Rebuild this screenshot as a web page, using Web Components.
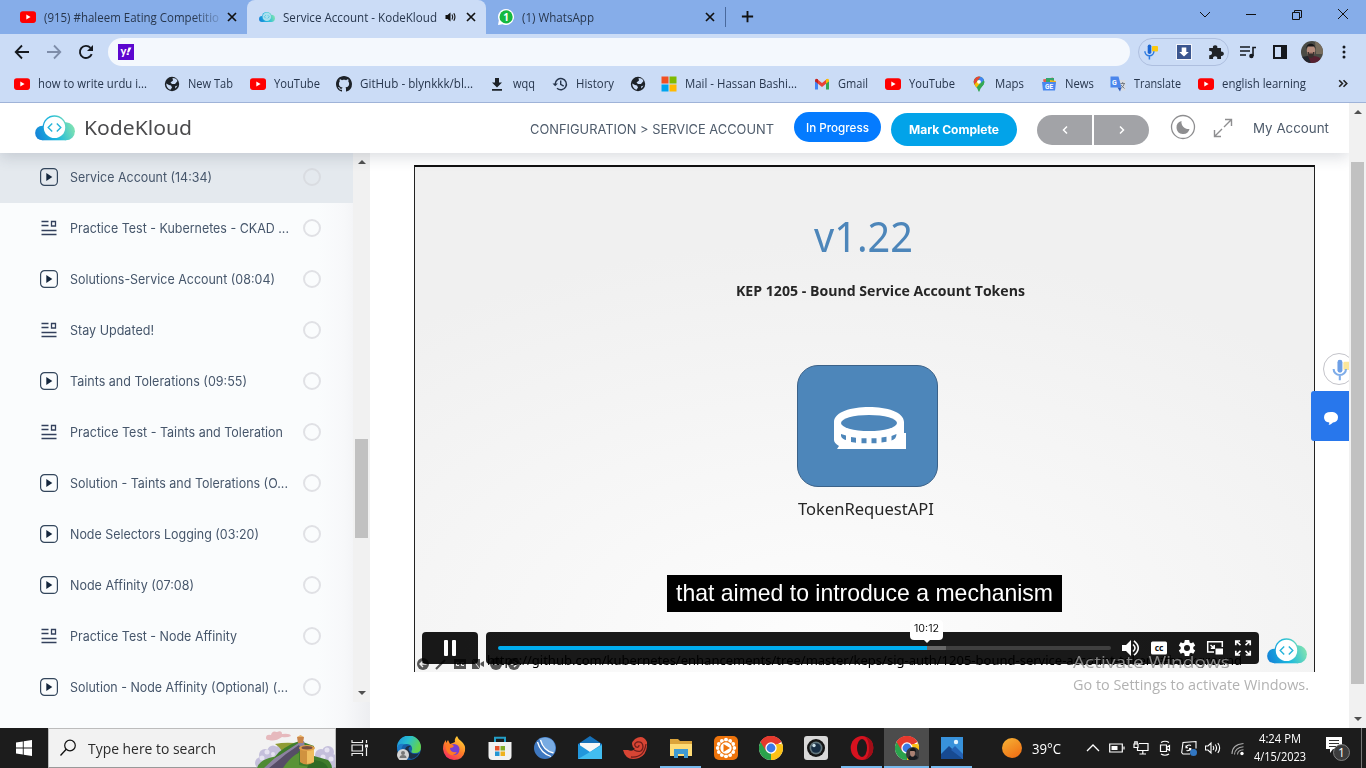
<!DOCTYPE html>
<html lang="en">
<head>
<meta charset="utf-8">
<title>Service Account - KodeKloud</title>
<style>
html,body{margin:0;width:1366px;height:768px;overflow:hidden;background:#fff}
</style>
</head>
<body>
<desktop-screen></desktop-screen>
<script>
const define = (name, css, html, after) => customElements.define(name, class extends HTMLElement {
  connectedCallback() {
    if (this.shadowRoot) return;
    const root = this.attachShadow({ mode: 'open' });
    root.innerHTML = `<style>*{box-sizing:border-box}${css}</style>` + (typeof html === 'function' ? html(this) : html);
    if (after) after(this, root);
  }
});

/* Text squeezed or stretched to the width given in "w". */
define('fit-text', `:host{display:block;flex:none;white-space:pre}span{display:inline-block;transform-origin:0 50%}`,
  '<span><slot></slot></span>',
  (el, root) => {
    const w = +el.getAttribute('w'), s = root.querySelector('span');
    el.style.width = 'max-content';
    const real = s.getBoundingClientRect().width;
    el.style.width = w + 'px';
    if (real) s.style.transform = `scaleX(${w / real})`;
  });

const cloud = `<svg viewBox="0 0 40 26"><defs><linearGradient id="c" gradientUnits="userSpaceOnUse" x1="2" y1="24" x2="37" y2="10"><stop offset="0" stop-color="#1583d8"/><stop offset=".5" stop-color="#1ab8dd"/><stop offset="1" stop-color="#7be0b4"/></linearGradient></defs><g fill="url(#c)"><circle cx="7.400" cy="18" r="7.300"/><circle cx="30.900" cy="16.300" r="9"/><circle cx="19.500" cy="12.100" r="11.800"/><path d="M7.400 14h23.500v11.300H7.400z"/></g><circle cx="19.500" cy="12.400" r="10.700" fill="#fff"/><path d="M17.200 8.400l-4 4 4 4M21.800 8.400l4 4-4 4" fill="none" stroke="#25b4da" stroke-width="1.400"/></svg>`;
const chromeArt = `<circle cx="12" cy="12" r="12" fill="#fff"/><path d="M12 12L1.600 6A12 12 0 0 1 22.400 6z" fill="#e5392d"/><path d="M12 12h10.400V6A12 12 0 0 1 12 24z" fill="#fbc116"/><path d="M12 12l0 12A12 12 0 0 1 1.600 6z" fill="#2ba24c"/><path d="M1.600 6L7 15 12 12V6h10.400A12 12 0 0 0 1.600 6" fill="#e5392d"/><path d="M12 24l5-9 0-7h5.400A12 12 0 0 1 12 24" fill="#fbc116"/><circle cx="12" cy="12" r="5.700" fill="#fff"/><circle cx="12" cy="12" r="4.400" fill="#3c79e6"/>`;
const ln = (d, w = 1.5, c = 'currentColor') => `<path d="${d}" fill="none" stroke="${c}" stroke-width="${w}"/>`;
const icons = {
  yt: `<svg viewBox="0 0 16 16"><rect y="2.300" width="16" height="11.600" rx="2.800" fill="#f00"/><path d="M6.300 5.600v5l4.300-2.500z" fill="#fff"/></svg>`,
  cloud,
  cloudtab: cloud.replace('fill="#fff"', 'fill="#a9e0ee"'),
  x: `<svg viewBox="0 0 16 16">${ln('M4 4l8 8M12 4l-8 8', 1.7)}</svg>`,
  sound: `<svg viewBox="0 0 16 16"><path d="M3.500 6h2L8.500 3.500v9L5.500 10h-2z" fill="currentColor"/>${ln('M10 5.500q1.500 2.500 0 5M11.800 4.300q2.300 3.700 0 7.400', 1.1)}</svg>`,
  wa: `<svg viewBox="0 0 16 16"><path d="M8 0a8 8 0 1 1-3.500 15.200L0 16l.8-4.500A8 8 0 0 1 8 0z" fill="#fff"/><circle cx="8.100" cy="7.900" r="6.600" fill="#15b93f"/><text x="8" y="11.500" text-anchor="middle" font-family="Open Sans,sans-serif" font-weight="700" font-size="10" fill="#fff">1</text></svg>`,
  plus: `<svg viewBox="0 0 16 16">${ln('M8 2v12M2 8h12', 2)}</svg>`,
  back: `<svg viewBox="0 0 16 16">${ln('M15 8H2M8 1.500L1.700 8 8 14.500', 1.800)}</svg>`,
  fwd: `<svg viewBox="0 0 16 16">${ln('M1 8h13M8 1.500L14.300 8 8 14.500', 1.800)}</svg>`,
  reload: `<svg viewBox="0 0 16 16">${ln('M13.700 10.200A6.100 6.100 0 1 1 12.500 3.800', 1.900)}<path d="M15 1v6H9z" fill="currentColor"/></svg>`,
  yahoo: `<svg viewBox="0 0 16 16"><path d="M0 0h16v16H0z" fill="#5c07cf"/><text x="2.500" y="11" font-family="Lato,sans-serif" font-weight="900" font-size="11" fill="#fff">y</text><path d="M10.500 3.500h3L11 8.500H9zM8.600 9.200h2.200v1.800H8.600z" fill="#fff"/></svg>`,
  mic: `<svg viewBox="0 0 16 16"><rect x="9" y="2" width="6" height="5.500" rx="1" fill="#fbc910"/><rect x="4.700" y=".5" width="3.600" height="9.500" rx="1.800" fill="#1b66d2"/>${ln('M1.900 7.200a4.500 4.500 0 0 0 9 0M6.400 12v3.500', 1.500, '#2d7be0')}</svg>`,
  micl: `<svg viewBox="0 0 16 16"><rect x="9" y="2" width="6" height="6" rx="1" fill="#fbe69a"/><rect x="4.700" y=".5" width="3.600" height="9.500" rx="1.800" fill="#6d9fe6"/>${ln('M1.900 7.200a4.500 4.500 0 0 0 9 0M6.400 12v3.500', 1.500, '#7fade9')}</svg>`,
  save: `<svg viewBox="0 0 16 16"><path d="M0 0h16v16H0z" fill="#f3f5fa"/><path d="M1 1h14v14H1z" fill="#3b568f"/><path d="M5.700 3.500h4.600V8h2.500L8 12.500 3.200 8h2.500z" fill="#fff"/></svg>`,
  puzzle: `<svg viewBox="0 0 16 16"><path d="M1.200 4H5a2.200 2.200 0 1 1 4.300 0h3.700v3.700a2.200 2.200 0 1 1 0 4.200v3H9.200a2.100 2.100 0 1 0-4.100 0h-3.900v-3.700a2.200 2.200 0 1 0 0-4.200z" fill="#202327"/></svg>`,
  music: `<svg viewBox="0 0 16 16">${ln('M0 3h10M0 7h10M0 11h6M13 12V3.500h3', 1.600)}<circle cx="11.400" cy="12" r="2.200" fill="currentColor"/></svg>`,
  panel: `<svg viewBox="0 0 16 16"><path d="M1 1h14v14H1zM3 3v10h6V3z" fill="#15181d" fill-rule="evenodd"/></svg>`,
  face: `<svg viewBox="0 0 22 22"><defs><clipPath id="f"><circle cx="11" cy="11" r="11"/></clipPath></defs><g clip-path="url(#f)"><path d="M0 0h22v22H0z" fill="#4a4b45"/><path d="M14 0h8v13h-7z" fill="#786d5d"/><path d="M2 22c0-7 4-7 9-7s10 1 10 7z" fill="#572131"/><path d="M0 22v-6l7-1 3 7z" fill="#22272e"/><ellipse cx="10" cy="9.500" rx="4.200" ry="6" fill="#b58c7c"/><path d="M5.500 8c-1-7 9-7 9 0l-1-2.500H6.500z" fill="#171719"/><path d="M6.500 11h7l-1 5q-2.500 2-5 0z" fill="#39302e"/><path d="M8 11h4v1.500H8z" fill="#a5796b"/></g></svg>`,
  dots: `<svg viewBox="0 0 16 16"><g fill="currentColor"><circle cx="8" cy="3" r="1.500"/><circle cx="8" cy="8" r="1.500"/><circle cx="8" cy="13" r="1.500"/></g></svg>`,
  globe: `<svg viewBox="0 0 16 16"><circle cx="8" cy="8" r="7.200" fill="#1d2228"/><path d="M8.500 2q4 0 5 3L11 8H8L6.500 6.500 9 4.500zM2.200 7.500L5 9l2 .5 1 2-1.500 2.300Q2.500 12.500 2.200 7.500zM11 10.500l2.500-1-2 3z" fill="#cbdcf6"/></svg>`,
  gh: `<svg viewBox="0 0 16 16"><path fill="#1d2228" d="M8 0C3.580 0 0 3.580 0 8c0 3.540 2.290 6.530 5.470 7.590.4.070.55-.17.55-.38 0-.19-.01-.82-.01-1.490-2.010.37-2.530-.49-2.690-.94-.09-.23-.48-.94-.82-1.130-.28-.15-.68-.52-.01-.53.63-.01 1.080.58 1.230.82.72 1.210 1.870.87 2.330.66.07-.52.28-.87.51-1.070-1.780-.2-3.640-.89-3.640-3.950 0-.87.31-1.590.82-2.150-.08-.2-.36-1.020.08-2.120 0 0 .67-.21 2.200.82.64-.18 1.320-.27 2-.27s1.360.09 2 .27c1.530-1.040 2.200-.82 2.200-.82.44 1.100.16 1.920.08 2.120.51.56.82 1.270.82 2.150 0 3.070-1.870 3.750-3.650 3.950.29.25.54.73.54 1.480 0 1.070-.01 1.930-.01 2.200 0 .21.15.46.55.38A8 8 0 0 0 16 8c0-4.420-3.580-8-8-8z"/></svg>`,
  dl: `<svg viewBox="0 0 16 16"><path d="M6 2h4v4.500h3L8 11.500 3 6.500h3zM3 13h10v1.700H3z" fill="#1d2228"/></svg>`,
  hist: `<svg viewBox="0 0 16 16">${ln('M3.200 8A5.600 5.600 0 1 1 5 12.300M8.700 4.500V8.300l3 1.800', 1.400)}<path d="M.5 7.500h5.400L3.200 10.300z" fill="currentColor"/></svg>`,
  ms: `<svg viewBox="0 0 16 16"><path d="M.5.500h7v7h-7z" fill="#f25022"/><path d="M8.500.500h7v7h-7z" fill="#7fba00"/><path d="M.5 8.500h7v7h-7z" fill="#00a4ef"/><path d="M8.500 8.500h7v7h-7z" fill="#ffb900"/></svg>`,
  gmail: `<svg viewBox="0 0 16 16"><path d="M1 4l3 2v7.500H1z" fill="#4285f4"/><path d="M12 6l3-2v9.500h-3z" fill="#34a853"/><path d="M3 3l5 4 5-4v4l-5 4-5-4z" fill="#ea4335"/><path d="M1 4.500Q1 1.500 4 3.300V7.500L1 5.500z" fill="#c5221f"/><path d="M15 4.500Q15 1.500 12 3.300V7.500l3-2z" fill="#fbbc04"/></svg>`,
  maps: `<svg viewBox="0 0 16 16"><path d="M8 .5a5.300 5.300 0 0 1 5.300 5.300C13.300 9.500 9.500 11 8.500 15.500h-1C6.500 11 2.700 9.500 2.700 5.800A5.300 5.300 0 0 1 8 .5z" fill="#34a853"/><path d="M4 2.500A5.300 5.300 0 0 1 9.700.8L6.300 4.700z" fill="#ea4335"/><path d="M13.200 5q.6 3.500-3 6L8 12.500 4.500 10z" fill="#34a853"/><path d="M3.300 8.500L6.500 4.700 8.500 8 5.500 11.500z" fill="#fbbc04"/><path d="M9.700.8A5.300 5.300 0 0 1 13 4L9.700 7.300 7.500 3.500z" fill="#4285f4"/><path d="M2.700 5.800q0-2 1.300-3.300l2.500 2L3.300 8.500z" fill="#ea4335"/><circle cx="8" cy="5.800" r="1.900" fill="#fff"/></svg>`,
  news: `<svg viewBox="0 0 16 16"><path d="M2 3.500l10-2 .8 6H3z" fill="#e35b4d"/><path d="M5 2h8v7H5z" fill="#35a56a"/><path d="M9 4l6 1-1 4H9z" fill="#f4b51c"/><path d="M1 6h14l-1 8.500H2z" fill="#4a87ee"/><text x="8" y="12.500" text-anchor="middle" font-size="6.500" font-weight="700" font-family="Roboto,sans-serif" fill="#fff">GE</text></svg>`,
  trans: `<svg viewBox="0 0 16 16"><path d="M7 4h8.500v10.500H10z" fill="#d8dce3"/><path d="M.5.500h8l3 11H.5z" fill="#4b86ec"/><path d="M7.500 11.500h4L10 15.500z" fill="#2c5cc0"/>${ln('M10.500 7.500h4.500M12.700 6v1.500M14.300 7.500q-.7 3-3 4.500M11 9l3.500 3.500', .9, '#70777f')}<text x="2" y="8.500" font-size="7" font-weight="700" font-family="Roboto,sans-serif" fill="#fff">G</text></svg>`,
  play: `<svg viewBox="0 0 18 18"><rect x=".6" y=".6" width="16.800" height="16.800" rx="4" fill="none" stroke="#33465c" stroke-width="1.200"/><path d="M6.300 5v8l6-4z" fill="#14263c"/></svg>`,
  list: `<svg viewBox="0 0 18 18">${ln('M1.500 2.500h7M1.500 6.500h7M1.500 11.500h15M1.500 15.500h15M11.500 2.500h4v4.500h-4z', 1.300, '#33405c')}</svg>`,
  moon: `<svg viewBox="0 0 26 26"><circle cx="13" cy="13" r="11.500" fill="none" stroke="#8e8e90" stroke-width="1.300"/><path d="M11.500 7a7 7 0 0 0 8 8 6.600 6.600 0 1 1-8-8z" fill="#8e8e90"/></svg>`,
  expand: `<svg viewBox="0 0 20 20">${ln('M12 1.500h6.500V8M18 2l-7 7M1.500 12v6.500H8M2 18l7-7', 1.400, '#8e8e90')}</svg>`,
  tape: `<svg viewBox="0 0 74 44"><path d="M1 16C1-4 71-4 71 16V27h2V43H4l2-3q-5-3-5-6z" fill="#fff"/><ellipse cx="36" cy="17" rx="28" ry="8" fill="#4d86ba"/><g fill="#4d86ba"><path d="M8 28l5 1.500v4.500q-4-1-5-4zM18 31l5 .7v5l-5-.7zM28.500 32.200h5v5h-5zM38.500 32.200h5v5h-5zM48.500 31.500l5-.8v5l-5 .8zM58.500 30l5-2q0 5-5 6.500z"/></g></svg>`,
  vol: `<svg viewBox="0 0 18 18"><path d="M0 6h4l5-5v16l-5-5H0z" fill="#fff"/>${ln('M11 5.500q4 3.500 0 7M12 1.800q8.500 7.200 0 14.400', 1.600, '#fff')}</svg>`,
  cc: `<svg viewBox="0 0 18 18"><rect x="1" y="2.500" width="16" height="13" rx="1.500" fill="#fff"/><text x="9" y="12.300" text-anchor="middle" font-size="8.500" font-weight="700" font-family="Open Sans,sans-serif" fill="#111">cc</text></svg>`,
  gear: `<svg viewBox="0 0 18 18"><path fill="#fff" fill-rule="evenodd" d="M6.800 1h4.400l.5 2.500 1.300.7 2.300-1 1.900 3.200L15.300 8v2l1.900 1.600-1.900 3.200-2.300-1-1.300.7-.5 2.500H6.800l-.5-2.500-1.300-.7-2.300 1-1.900-3.200L2.700 10V8L.8 6.400l1.900-3.200 2.300 1 1.300-.7zM9 6a3 3 0 1 0 0 6 3 3 0 0 0 0-6z"/></svg>`,
  pip: `<svg viewBox="0 0 18 18">${ln('M8 13H1.700V2.700h14.600V8M4.500 6l3.500 3M8.200 6v3.300H4.800', 1.500, '#fff')}<path d="M9.500 9.500H17V15.500H9.500z" fill="#fff"/></svg>`,
  full: `<svg viewBox="0 0 18 18">${ln('M1.800 6.200V2h4.300M2 2l4.500 4.200M11.800 2h4.400v4.200M16 2l-4.500 4.200M1.800 11.800V16h4.300M2 16l4.500-4.200M11.800 16h4.400v-4.200M16 16l-4.500-4.200', 1.700, '#fff')}</svg>`,
  win: `<svg viewBox="0 0 16 16"><path d="M0 2.500l6.800-1V7.600H0zM7.700 1.300L16 0v7.600H7.700zM0 8.400h6.800v6.100l-6.800-1zM7.700 8.400H16V16l-8.300-1.300z" fill="#fff"/></svg>`,
  search: `<svg viewBox="0 0 18 18"><circle cx="11" cy="6.500" r="5.300" fill="none" stroke="#111" stroke-width="1.200"/>${ln('M7.200 10.300L1.500 16.500', 1.300, '#111')}</svg>`,
  wall: `<svg viewBox="0 0 80 40"><g fill="#c4bfdb"><circle cx="10" cy="27" r="6"/><circle cx="18" cy="23" r="5.500"/><circle cx="24" cy="23" r="5"/><circle cx="6" cy="35" r="6"/><circle cx="14" cy="34" r="6"/><circle cx="73" cy="24" r="6"/><circle cx="66" cy="27" r="6"/><circle cx="77" cy="33" r="7"/><circle cx="69" cy="34" r="6"/></g><g fill="#e6e3f1"><circle cx="12" cy="24" r="2.500"/><circle cx="7" cy="30" r="2.500"/><circle cx="18" cy="26" r="2"/><circle cx="72" cy="22" r="2.500"/><circle cx="68" cy="29" r="2.500"/><circle cx="76" cy="31" r="2.500"/></g><path d="M11 10q0-4 5-3 1-5 6-3 5-2 5 2 8-1 9 2-4 2-9 1-7 5-13 3-3 0-3-2z" fill="#e6b9bd"/><path d="M20 16q9-2 20-1l-13 8q-2-4-7-7z" fill="#8f9b35"/><path d="M24 24q10-8 21-11l14 5v10l14 4q4 4 4 8H10z" fill="#3f7d2c"/><path d="M8 40q8-9 17-13l20-13 4-1 1 7-9 4-19 16z" fill="#8c82a0"/><path d="M14 40q10-8 17-14l13-9 2 4-16 19z" fill="#564d66"/><path d="M2 40q2-7 12-10l8-2-13 12z" fill="#4e8a33"/><path d="M28 40q8-12 16-15v12l16 3z" fill="#5a9336"/><path d="M56 32q14 0 17 8H52z" fill="#2f6b25"/><path d="M45 20h14v14q-7 5-14 0z" fill="#d0923f"/><path d="M52 20h7v14l-7 2z" fill="#efbd5f"/><ellipse cx="52" cy="20" rx="8" ry="3" fill="#e0a04b"/><ellipse cx="52" cy="19.800" rx="5.500" ry="1.700" fill="#785044"/><path d="M42 9h7l-1 6h-5z" fill="#c98448"/><path d="M42 9l3.500-2L49 9z" fill="#e8b268"/></svg>`,
  task: `<svg viewBox="0 0 18 18">${ln('M1 1v2.500h10.500V1M1 17v-2.500h10.500V17M1 6h10.500v6H1zM15.500 1v3M15.500 9v8', 1.200, '#eee')}<path d="M14 5.500h3v3h-3z" fill="#eee"/></svg>`,
  edge: `<svg viewBox="0 0 24 24"><defs><linearGradient id="e" x2="1" y2=".4"><stop stop-color="#1c8fe0"/><stop offset=".5" stop-color="#28bfcf"/><stop offset="1" stop-color="#62d34e"/></linearGradient></defs><circle cx="12" cy="12" r="12" fill="#155fa8"/><path d="M0 12a12 12 0 0 1 24-1q0 6-6 6-5 0-3-3 1-5-5-6Q3 8 0 12z" fill="url(#e)"/><path d="M14 10q-5 2 0 7 4 2 8 0-2 5-8 6Q7 20 8 13q2-4 6-3z" fill="#1c2f46"/><path d="M0 12q1-5 7-4-4 4-2 10 2 5 7 6Q1 23 0 12z" fill="#1b7cc9"/><circle cx="6" cy="19" r="6" fill="#d4d4d4"/><circle cx="6" cy="17" r="2" fill="#777"/><path d="M2.500 22q0-3 3.500-3t3.500 3z" fill="#777"/></svg>`,
  fox: `<svg viewBox="0 0 24 24"><defs><linearGradient id="x" x1=".8" x2=".2" y2="1"><stop stop-color="#ffdb38"/><stop offset=".5" stop-color="#ff7f27"/><stop offset="1" stop-color="#f32464"/></linearGradient></defs><path d="M15 0q1 3 4 5 5 4 4 10-2 9-11 9Q2 23 1 13q0-6 3-9v3l2-3 2 4q3-1 5-2-1-3 2-6z" fill="url(#x)"/><circle cx="12" cy="13.500" r="5.500" fill="#7540d3"/><path d="M4 9q6-2 8 1-1 2-4 2 0 5 7 4-4 6-9 1-3-4-2-8z" fill="#ff7a24"/></svg>`,
  store: `<svg viewBox="0 0 24 24"><path d="M7 7V1.800h10V7" fill="none" stroke="#239fc8" stroke-width="2"/><path d="M.5 6h23v14q0 4-4 4h-15q-4 0-4-4z" fill="#f1f1f1"/><path d="M7 10h4.500v4.500H7z" fill="#e5532d"/><path d="M12.500 10H17v4.500h-4.500z" fill="#83ab27"/><path d="M7 15.500h4.500V20H7z" fill="#2496d4"/><path d="M12.500 15.500H17V20h-4.500z" fill="#efb21e"/></svg>`,
  blue: `<svg viewBox="0 0 24 24"><circle cx="12" cy="12" r="11" fill="#3f78c0"/><path d="M6 3Q14-1 20 5q4 6 1 12-9 0-15-14z" fill="#78abe2"/>${ln('M4.500 6q3 11 13.500 14.500M7.500 4q3 11 13 13', 1.300, '#fff')}</svg>`,
  mail: `<svg viewBox="0 0 24 24"><path d="M0 8l12-8 12 8v15H0z" fill="#1670b8"/><path d="M2 7h20v9H2z" fill="#f7f7f7"/><path d="M0 8l12 8L24 8v15H0z" fill="#2196dc"/><path d="M0 23L24 9v14z" fill="#42bdf0"/></svg>`,
  shell: `<svg viewBox="0 0 24 24"><path d="M0 14h5q4 2 7-1-6-5 0-10 8-5 12 3 1 12-8 16Q3 26 0 14z" fill="#d84534"/>${ln('M11 14q8 4 9-3 0-6-6-5-4 2-1 5 3 1 3-2M23 8q-2 14-15 13', 1.300, '#701e1b')}</svg>`,
  folder: `<svg viewBox="0 0 24 24"><path d="M1 3h8l2 2h12v15H1z" fill="#dca43b"/><path d="M1 8h22v12H1z" fill="#ffdc76"/><path d="M5 13h14v9h-4v-4H9v4H5z" fill="#409bd2"/></svg>`,
  flower: `<svg viewBox="0 0 24 24"><rect width="24" height="24" rx="5" fill="#ee740c"/><g fill="#fff"><circle cx="12" cy="3.800" r="2"/><circle cx="16.100" cy="4.900" r="2"/><circle cx="19.100" cy="7.900" r="2"/><circle cx="20.200" cy="12" r="2"/><circle cx="19.100" cy="16.100" r="2"/><circle cx="16.100" cy="19.100" r="2"/><circle cx="12" cy="20.200" r="2"/><circle cx="7.900" cy="19.100" r="2"/><circle cx="4.900" cy="16.100" r="2"/><circle cx="3.800" cy="12" r="2"/><circle cx="4.900" cy="7.900" r="2"/><circle cx="7.900" cy="4.900" r="2"/></g><circle cx="12" cy="12" r="6.700" fill="#ee740c"/><circle cx="12" cy="12" r="5.700" fill="#fff"/><path d="M9.500 8v8l6.500-4z" fill="#ee740c"/></svg>`,
  chrome: `<svg viewBox="0 0 24 24">${chromeArt}</svg>`,
  camera: `<svg viewBox="0 0 24 24"><rect width="24" height="24" rx="3" fill="#d9d9d9"/><circle cx="12" cy="12" r="9" fill="#151515"/><circle cx="12" cy="12" r="6.500" fill="#61747b"/><circle cx="12" cy="12" r="4.800" fill="#172d43"/><circle cx="10" cy="9.500" r="1.700" fill="#cae0e9"/></svg>`,
  opera: `<svg viewBox="0 0 24 24"><ellipse cx="12" cy="12" rx="11.300" ry="12" fill="#d6121f"/><path d="M15 .8q8.300 2 8.300 11.200T15 23.200q4-3 4-11.200T15 .8z" fill="#a20d17"/><ellipse cx="12" cy="12" rx="5" ry="9" fill="#1c1c1c"/></svg>`,
  chrome2: `<svg viewBox="0 0 24 24">${chromeArt}<circle cx="18" cy="18" r="7" fill="#39393b"/><path d="M13 23q1-4 5-4t5 3q-5 4-10 1z" fill="#171b20"/><ellipse cx="17.500" cy="17" rx="2.500" ry="3.700" fill="#aa8173"/><path d="M15 15q0-3 3-3t3 4l-2-1z" fill="#151515"/></svg>`,
  photo: `<svg viewBox="0 0 24 24"><path d="M1 1h22v22H1z" fill="#3892db"/><path d="M1 18l8-8 14 13H1z" fill="#174a91"/><path d="M11 14l4-4 8 8v5z" fill="#2462b4"/><circle cx="16" cy="6" r="2.200" fill="#e4f5ff"/></svg>`,
  sun: `<svg viewBox="0 0 20 20"><defs><linearGradient id="s" x2=".6" y2="1"><stop stop-color="#f6b436"/><stop offset="1" stop-color="#f07316"/></linearGradient></defs><circle cx="10" cy="10" r="10" fill="url(#s)"/></svg>`,
  up: `<svg viewBox="0 0 16 16">${ln('M2 11l6-6 6 6', 1.3)}</svg>`,
  batt: `<svg viewBox="0 0 16 16">${ln('M.7 4h12.600v8H.7zM15 6.500v3', 1.2)}<path d="M2.500 6h6v4h-6z" fill="currentColor"/></svg>`,
  net: `<svg viewBox="0 0 16 16">${ln('M6 3.500h9v7H4.500V8M9.800 10.500V14M6.500 14h6.500M1 4h4v3.500H1zM1.800 4V1.800h2.400V4', 1.2)}</svg>`,
  meet: `<svg viewBox="0 0 16 16">${ln('M3.500 5h6v6.500h-6zM9.500 7.500l3-2v5l-3-2M4 2.500q4-2.500 8 0M4 14q4 2.500 8 0', 1.2)}</svg>`,
  sync: `<svg viewBox="0 0 16 16">${ln('M9 14H2L.7 12.500 2 2.500l13-1v7M10 5.500a3.300 3.300 0 0 0-5 2M5 5.500v2.200h2M5.500 10.500a3.300 3.300 0 0 0 4-2M9.800 10.700V8.500H8', 1.100)}<circle cx="12.500" cy="12.500" r="3.500" fill="#3277c3"/></svg>`,
  spk: `<svg viewBox="0 0 16 16">${ln('M.5 6H3l3-3v10l-3-3H.5zM8 6q1.500 2 0 4M10.300 4.500q2.500 3.500 0 7M12.800 3q3.700 5 0 10', 1.1)}</svg>`,
  wifi: `<svg viewBox="0 0 16 16">${ln('M3 14Q3 4.500 14.500 3.500M5.500 14.500Q6 7.500 14.500 6.800M8.500 14.500q0-4.500 6-4.800', 1.1, '#aaa')}<circle cx="13" cy="13.500" r="1.700" fill="#fff"/></svg>`,
  note: `<svg viewBox="0 0 26 26"><path d="M1 1h16v12H8l-3 4v-4H1z" fill="#fff"/>${ln('M4 4.500h10M4 7.500h10M4 10.500h7', 1, '#333')}<circle cx="16.500" cy="16.500" r="8" fill="#3c3c3c" stroke="#969696" stroke-width=".8"/><text x="16.500" y="21" text-anchor="middle" font-size="12" font-family="Open Sans,sans-serif" fill="#fff">1</text></svg>`,
  vdown: `<svg viewBox="0 0 12 12">${ln('M1 4l5 5 5-5', 1)}</svg>`,
  min: `<svg viewBox="0 0 12 12">${ln('M1 6.500h10', 1)}</svg>`,
  max: `<svg viewBox="0 0 12 12">${ln('M1.500 4.500h7v7h-7zM3.500 4.500v-2h7v7h-2', 1)}</svg>`,
  close: `<svg viewBox="0 0 12 12">${ln('M1 1l10 10M11 1L1 11', 1)}</svg>`,
  more2: `<svg viewBox="0 0 12 12">${ln('M2 3l3 3-3 3M6 3l3 3-3 3', 1.500, '#222')}</svg>`,
  slideL: `<svg viewBox="0 0 12 12"><circle cx="6" cy="6" r="6" fill="#555"/>${ln('M9.500 6H3M6 3L3 6l3 3', 1.400, '#eee')}</svg>`,
  slideR: `<svg viewBox="0 0 12 12"><circle cx="6" cy="6" r="6" fill="#555"/>${ln('M2.500 6H9M6 3l3 3-3 3', 1.400, '#eee')}</svg>`,
  pen: `<svg viewBox="0 0 12 12">${ln('M1 11L10 2', 2.200, '#555')}</svg>`,
  cc2: `<svg viewBox="0 0 12 12"><path d="M0 1h12v10H0z" fill="#555"/>${ln('M5 4.500H2.500v3H5M10 4.500H7.500v3H10', 1, '#eee')}</svg>`,
  nocam: `<svg viewBox="0 0 12 12"><path d="M0 1h8v10H0zM8.500 5L12 3v6L8.500 7z" fill="#555"/>${ln('M0 1l8 10', 1, '#eee')}</svg>`,
  more: `<svg viewBox="0 0 12 12"><circle cx="6" cy="6" r="6" fill="#555"/><path d="M2.500 5.200h1.600v1.600H2.500zM5.200 5.200h1.600v1.600H5.200zM7.900 5.200h1.600v1.600H7.900z" fill="#eee"/></svg>`,
  chat: `<svg viewBox="0 0 16 16"><path d="M8 2c4.500 0 7 2 7 5.300S13 12 10 12.500Q8 14.800 5.500 15q1-1.300.8-2.600Q1 12 1 7.300 1 2 8 2z" fill="#fff"/></svg>`
};
define('ui-icon', `:host{display:block;flex:none;width:var(--s,16px);height:var(--h,var(--s,16px))}svg{display:block;width:100%;height:100%}`,
  el => icons[el.getAttribute('name')] || '');

define('browser-tab', `:host{display:flex;align-items:center;height:34px;color:#27364d;font:12px "Open Sans",sans-serif;--s:16px;flex:none}
:host([active]){background:#cbdcf6;border-radius:8px 8px 0 0}.sp{flex:1}ui-icon:last-child{color:#111}.snd{color:#111;margin-right:5px}
fit-text{margin-left:8px}:host([fade]) fit-text{-webkit-mask:linear-gradient(90deg,#000 85%,rgba(0,0,0,.2))}`,
  el => `<ui-icon name="${el.getAttribute('icon')}"></ui-icon><fit-text w="${el.getAttribute('w')}">${el.getAttribute('label')}</fit-text><div class="sp"></div>${el.hasAttribute('active') ? '<ui-icon class="snd" name="sound"></ui-icon>' : ''}<ui-icon name="x"></ui-icon>`);

define('tab-strip', `:host{display:flex;height:34px;background:#86ade9}
browser-tab:nth-of-type(1){width:247px;padding:0 7px 0 20px}browser-tab:nth-of-type(2){width:239px;padding:0 7px 0 12px}browser-tab:nth-of-type(3){width:239px;padding:0 7px 0 12px}
i{width:1px;height:20px;margin-top:7px;background:#49699d}.p{margin:9px 0 0 14px;color:#111}.g{flex:1}.c{display:flex;gap:34px;padding:8px 17px 0 0;--s:12px;color:#111}`,
  `<browser-tab icon="yt" w="175" fade label="(915) #haleem Eating Competitio"></browser-tab><browser-tab active icon="cloudtab" w="154" label="Service Account - KodeKloud"></browser-tab><browser-tab icon="wa" w="72" label="(1) WhatsApp"></browser-tab><i></i><ui-icon class="p" name="plus" style="--s:15px"></ui-icon><div class="g"></div><div class="c"><ui-icon name="vdown"></ui-icon><ui-icon name="min"></ui-icon><ui-icon name="max"></ui-icon><ui-icon name="close"></ui-icon></div>`);

define('tool-bar', `:host{display:flex;align-items:center;height:36px;background:#cbdcf6;padding-left:14px;color:#15191f}
.n{margin-right:16px}.o{width:1022px;height:28px;border-radius:14px;background:#f4f8fd;margin-left:-2px;padding:6px 10px}
.e{width:91px;height:28px;border:1px solid #aebfdf;border-radius:14px;margin-left:8px;display:flex;align-items:center;padding-left:4px;gap:17px;--s:16px}.m{margin-left:11px}.k{margin-left:16px}.f{margin-left:13px}.d{margin-left:13px}`,
  `<ui-icon class="n" name="back"></ui-icon><ui-icon class="n" name="fwd" style="color:#7e8da9"></ui-icon><ui-icon class="n" name="reload"></ui-icon><div class="o"><ui-icon name="yahoo"></ui-icon></div><div class="e"><ui-icon name="mic"></ui-icon><ui-icon name="save"></ui-icon><ui-icon name="puzzle" style="margin-left:-1px"></ui-icon></div><ui-icon class="m" name="music"></ui-icon><ui-icon class="k" name="panel"></ui-icon><ui-icon class="f" name="face" style="--s:22px"></ui-icon><ui-icon class="d" name="dots"></ui-icon>`);

define('book-mark', `:host{display:flex;align-items:center;gap:8px;flex:none}`,
  el => `<ui-icon name="${el.getAttribute('icon')}"></ui-icon>${el.getAttribute('label') ? `<fit-text w="${el.getAttribute('w')}">${el.getAttribute('label')}</fit-text>` : ''}`);
const marks = [['yt', 'how to write urdu i...', 109, 150], ['globe', 'New Tab', 45, 86], ['yt', 'YouTube', 46, 86], ['gh', 'GitHub - blynkkk/bl...', 113, 153], ['dl', 'wqq', 22, 63], ['hist', 'History', 38, 78], ['globe', '', 0, 31], ['ms', 'Mail - Hassan Bashi...', 112, 153], ['gmail', 'Gmail', 30, 71], ['yt', 'YouTube', 46, 86], ['maps', 'Maps', 29, 70], ['news', 'News', 29, 69], ['trans', 'Translate', 47, 88], ['yt', 'english learning', 84, 139]];
define('bookmark-bar', `:host{display:flex;align-items:center;height:33px;padding:0 0 5px 14px;background:#cbdcf6;border-bottom:1px solid #9fb3d8;font:12px "Open Sans",sans-serif;color:#27364d}`,
  () => marks.map(m => `<book-mark icon="${m[0]}" label="${m[1]}" w="${m[2]}" style="width:${m[3]}px"></book-mark>`).join('') + '<ui-icon name="more2" style="--s:13px"></ui-icon>');

define('site-header', `:host{display:flex;align-items:center;height:50px;width:1349px;background:#fff;box-shadow:0 4px 14px rgba(50,60,85,.18);position:relative;z-index:3;font:13px Inter,sans-serif;color:#4e5b6b;clip-path:inset(0 0 -18px 0)}
.l{margin:0 0 0 35px;--s:40px;--h:26px}.w{font:20px/28px "Noto Sans",sans-serif;color:#4a4a4c;margin:0 0 0 9px}.b{margin:2px 0 0 338px}
.pill{display:flex;align-items:center;justify-content:center;color:#fff;border-radius:20px;flex:none}
.p{width:87px;height:30px;background:#047bff;margin:-2px 0 0 20px;font-size:12px;font-weight:500}.m{width:126px;height:33px;background:#02a3e9;margin:2px 0 0 10px;font-weight:700;font-size:12px}
.n{display:flex;gap:2px;margin:4px 0 0 20px}.n span{width:55px;height:30px;background:#a2a3a7;color:#fff;display:flex;align-items:center;justify-content:center}.n span:first-child{border-radius:15px 0 0 15px}.n span:last-child{border-radius:0 15px 15px 0}.n svg{width:8px;height:10px}`,
  `<ui-icon class="l" name="cloud"></ui-icon><fit-text class="w" w="108">KodeKloud</fit-text><fit-text class="b" w="244">CONFIGURATION &gt; SERVICE ACCOUNT</fit-text><div class="pill p"><fit-text w="63">In Progress</fit-text></div><div class="pill m"><fit-text w="90">Mark Complete</fit-text></div><div class="n"><span><svg viewBox="0 0 8 10">${ln('M6 1.500L2.500 5 6 8.500', 1.5)}</svg></span><span><svg viewBox="0 0 8 10">${ln('M2 1.500L5.500 5 2 8.500', 1.5)}</svg></span></div><ui-icon name="moon" style="--s:26px;margin:-2px 0 0 21px"></ui-icon><ui-icon name="expand" style="--s:20px;margin:0 0 0 17px"></ui-icon><fit-text w="76" style="margin-left:20px">My Account</fit-text>`);

define('lesson-row', `:host{display:flex;align-items:center;height:51px;padding-left:40px;font:13px Inter,sans-serif;color:#46566b;flex:none;--s:18px}:host([on]){background:#e4e9ee}.t{width:232.500px;margin-left:12px}i{width:18px;height:18px;border:2px solid #e0e1e5;border-radius:50%}:host([on]) i{border-color:#d9dce1}`,
  el => `<ui-icon name="${el.getAttribute('icon')}"></ui-icon><div class="t"><fit-text w="${el.getAttribute('w')}">${el.getAttribute('label')}</fit-text></div><i></i>`);
const rows = [['play', 'Service Account (14:34)', 142], ['list', 'Practice Test - Kubernetes - CKAD ...', 219], ['play', 'Solutions-Service Account (08:04)', 205], ['list', 'Stay Updated!', 84], ['play', 'Taints and Tolerations (09:55)', 177], ['list', 'Practice Test - Taints and Toleration', 213], ['play', 'Solution - Taints and Tolerations (O...', 218], ['play', 'Node Selectors Logging (03:20)', 189], ['play', 'Node Affinity (07:08)', 124], ['list', 'Practice Test - Node Affinity', 167], ['play', 'Solution - Node Affinity (Optional) (...', 218]];

define('scroll-bar', `:host{display:flex;flex-direction:column;align-items:center;width:17px;background:#f1f1f1;flex:none}.a{border:4px solid transparent;height:0;width:0;flex:none}.u{border-top:0;border-bottom:4px solid #505050;margin-top:7px}.d{border-bottom:0;border-top:4px solid #505050;margin:auto 0 7px}.h{width:13px;background:#c1c1c1;flex:none}`,
  el => `<div class="a u"></div><div class="h" style="margin-top:${el.getAttribute('top')}px;height:${el.getAttribute('len')}px"></div><div class="a d"></div>`);

define('side-bar', `:host{display:flex;width:370px;height:575px;background:linear-gradient(90deg,#fafcfd 86%,#f7f8fa 93%,#edeef1)}.r{width:353px;margin-top:-1px;flex:none}lesson-row{padding-bottom:2px}scroll-bar{height:549px}`,
  () => `<div class="r">${rows.map((r, i) => `<lesson-row ${i ? '' : 'on'} icon="${r[0]}" label="${r[1]}" w="${r[2]}"></lesson-row>`).join('')}</div><scroll-bar top="275" len="99"></scroll-bar>`);

define('player-bar', `:host{display:flex;position:absolute;left:7px;bottom:8px;height:32px;gap:8px}
.p{width:56px;border-radius:4px;background:rgba(0,0,0,.9);display:flex;align-items:center;justify-content:center;gap:4px}.p i{width:4px;height:16px;border-radius:1px;background:#fff}
.b{width:773px;border-radius:4px;background:rgba(0,0,0,.9);display:flex;align-items:center;padding-left:12px;--s:18px}
.t{position:relative;width:613px;flex:none;height:4px;border-radius:2px;background:linear-gradient(90deg,#00adef 429px,#686868 429px 448px,#3f3f3f 448px);margin-right:11px}.b ui-icon{margin-right:10px}
.tip{position:absolute;left:412px;bottom:10px;width:33px;height:20px;background:#fff;border-radius:4px;font:10px/17px Inter,sans-serif;color:#111;display:flex;justify-content:center}.tip:after{content:"";position:absolute;bottom:-3px;left:13px;border:4px solid transparent;border-top-color:#fff;border-bottom:0}
.c{--s:40px;--h:26px;margin:6px 0 0 0}`,
  `<div class="p"><i></i><i></i></div><div class="b"><div class="t"><div class="tip"><fit-text w="25">10:12</fit-text></div></div><ui-icon name="vol"></ui-icon><ui-icon name="cc"></ui-icon><ui-icon name="gear"></ui-icon><ui-icon name="pip"></ui-icon><ui-icon name="full"></ui-icon></div><ui-icon class="c" name="cloud"></ui-icon>`);

define('video-slide', `:host{display:flex;flex-direction:column;position:relative;width:901px;height:507px;border:1px solid #222;border-top:2px solid #101010;border-bottom:0;background:radial-gradient(ellipse 75% 80% at 45% 95%,#fdfdfd,#f7f7f7 45%,#f0f0f0);font-family:"Noto Sans",sans-serif;color:#262626}
.v{font:41px/46px "Noto Sans",sans-serif;color:#4d86ba;margin:46px 0 0 399px}.k{font:bold 15px/20px "Open Sans",sans-serif;margin:21px 0 0 321px}
.box{width:141px;height:122px;border:1px solid #3b6289;border-radius:21px;background:#4d86ba;margin:65px 0 0 381.500px;padding:40px 0 0 35px;--s:74px;--h:44px}
.a{font-size:16px;line-height:22px;margin:11px 0 0 382.500px}
.cap{width:395px;height:37px;background:#000;color:#fff;font:24px/36px "Liberation Sans",sans-serif;margin:55px 0 0 252px;padding-left:9px}
.foot{display:flex;align-items:center;position:absolute;left:2px;bottom:0;height:22px;--s:12px;gap:6.300px}.foot ui-icon{margin-top:6px}
.url{position:absolute;left:72px;bottom:2px;color:#000;font-size:13px;line-height:20px}`,
  `<fit-text class="v" w="99">v1.22</fit-text><fit-text class="k" w="289">KEP 1205 - Bound Service Account Tokens</fit-text><div class="box"><ui-icon name="tape"></ui-icon></div><fit-text class="a" w="136">TokenRequestAPI</fit-text><div class="cap"><fit-text w="377">that aimed to introduce a mechanism</fit-text></div><div class="foot">${['slideL', 'pen', 'cc2', 'nocam', 'more', 'slideR'].map(n => `<ui-icon name="${n}"></ui-icon>`).join('')}</div><fit-text class="url" w="755">https://github.com/kubernetes/enhancements/tree/master/keps/sig-auth/1205-bound-service-account-tokens#background</fit-text><player-bar></player-bar>`);

define('course-page', `:host{display:flex;height:625px;position:relative}.m{width:1349px}.r{display:flex}.v{padding:12px 0 0 44px}
.chat{position:absolute;left:1311px;top:288px;width:38px;height:50px;background:#2877ec;border-radius:3px 0 0 3px;padding:19px 0 0 12px}
.mw{position:absolute;left:1322px;top:249px;width:27px;height:34px;overflow:hidden}.mic{width:32px;height:32px;margin:1px;border:1px solid #c4c4ca;border-radius:50%;background:#fff;padding:5px 0 0 7px;--s:22px}
.act{position:absolute;left:1073px;top:548px;font:17px/22px "Open Sans",sans-serif;color:rgba(150,150,150,.85)}.go{font-size:14px;line-height:24px;color:#b2b2b2}`,
  `<div class="m"><site-header></site-header><div class="r"><side-bar></side-bar><div class="v"><video-slide></video-slide></div></div></div><scroll-bar top="48" len="522"></scroll-bar><div class="mw"><div class="mic"><ui-icon name="micl"></ui-icon></div></div><div class="chat"><ui-icon name="chat"></ui-icon></div><div class="act"><fit-text w="157">Activate Windows</fit-text><fit-text class="go" w="236">Go to Settings to activate Windows.</fit-text></div>`);

define('task-app', `:host{width:45.250px;height:40px;display:flex;align-items:center;justify-content:center;flex:none;--s:24px;border-bottom:2px solid transparent;padding-top:2px}:host([run]){border-image:linear-gradient(90deg,transparent 4px,#76b9ed 4px 41px,transparent 41px) 2}:host([on]){background:#4c4c4c;border-bottom-color:#76b9ed}`,
  el => `<ui-icon name="${el.getAttribute('icon')}"></ui-icon>`);
const apps = ['edge', 'fox', 'store', 'blue', 'mail', 'shell', 'folder', 'flower', 'chrome', 'camera', 'opera', 'chrome2', 'photo'];
define('task-bar', `:host{display:flex;height:40px;background:#1c1c1c;font:12px "Open Sans",sans-serif;color:#fff;align-items:center}
.s{width:48px;padding-left:16px}.q{width:288px;height:40px;background:#f2f2f2;border:1px solid #bcbcbc;border-bottom-color:#999;display:flex;align-items:center;color:#2b2b2b;font-size:15px;padding-left:10px;--s:18px}.q fit-text{margin-left:11px}.w{--s:80px;--h:40px;margin:0 0 0 39px}
.t{margin:0 17.400px 0 15px;--s:18px}.tray{display:flex;gap:8px;margin-left:24px;--s:16px}.clk{width:53px;margin-left:9px;line-height:18px}.clk fit-text:first-child{margin-left:5px}.line{width:1px;height:40px;background:#777;margin-left:10px}`,
  () => `<div class="s"><ui-icon name="win"></ui-icon></div><div class="q"><ui-icon name="search"></ui-icon><fit-text w="128">Type here to search</fit-text><ui-icon class="w" name="wall"></ui-icon></div><ui-icon class="t" name="task"></ui-icon>${apps.map(a => `<task-app icon="${a}" ${a === 'chrome2' ? 'on' : ['folder', 'opera', 'photo'].includes(a) ? 'run' : ''}></task-app>`).join('')}<ui-icon name="sun" style="--s:20px;margin-left:27.600px"></ui-icon><fit-text w="29" style="font-size:14px;margin-left:10px">39°C</fit-text><div class="tray">${['up', 'batt', 'net', 'meet', 'sync', 'spk', 'wifi'].map(n => `<ui-icon name="${n}"></ui-icon>`).join('')}</div><div class="clk"><fit-text w="42">4:24 PM</fit-text><fit-text w="52">4/15/2023</fit-text></div><ui-icon name="note" style="--s:26px;margin:2px 0 0 18px"></ui-icon><div class="line"></div>`);

define('desktop-screen', `:host{display:flex;flex-direction:column;width:1366px;height:768px;overflow:hidden;background:#fff}tab-strip,tool-bar,bookmark-bar,course-page,task-bar{flex:none}task-bar{position:relative;z-index:4}`,
  `<tab-strip></tab-strip><tool-bar></tool-bar><bookmark-bar></bookmark-bar><course-page></course-page><task-bar></task-bar>`);
</script>
</body>
</html>
